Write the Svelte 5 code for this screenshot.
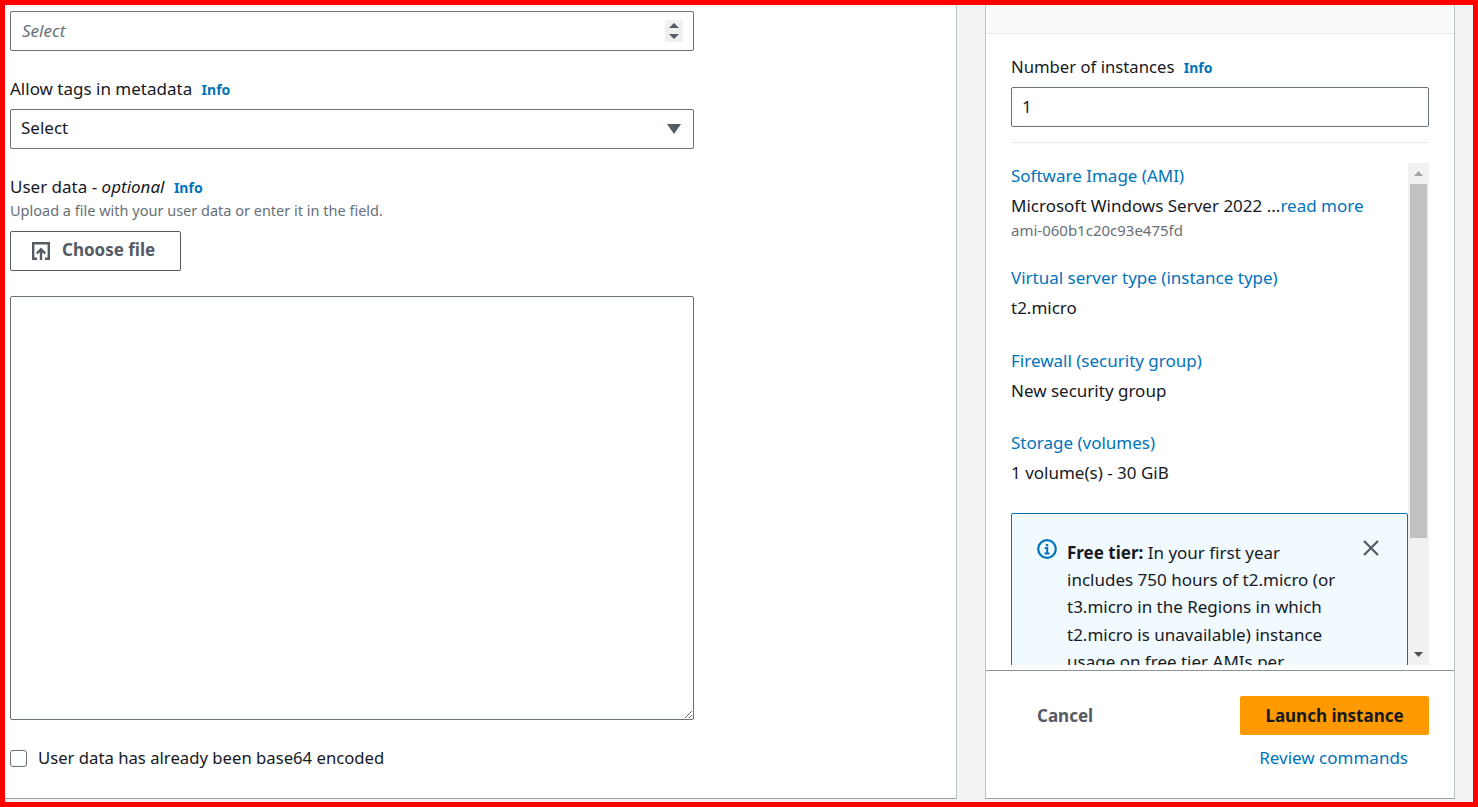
<script>
	const summary = [
		{ title: 'Software Image (AMI)', value: 'Microsoft Windows Server 2022 ...', more: 'read more', note: 'ami-060b1c20c93e475fd' },
		{ title: 'Virtual server type (instance type)', value: 't2.micro' },
		{ title: 'Firewall (security group)', value: 'New security group' },
		{ title: 'Storage (volumes)', value: '1 volume(s) - 30 GiB' }
	];
</script>

<div class="frame">
	<main class="form">
		<div class="select italic">
			<span>Select</span>
			<span class="stepper">
				<svg width="12" height="18" viewBox="0 0 12 18"><path d="M6 1l5 5H1zM6 17l-5-5h10z" fill="#545b64" /></svg>
			</span>
		</div>

		<div class="label first">Allow tags in metadata <a href="#info" class="info">Info</a></div>
		<div class="select">
			<span class="select-text">Select</span>
			<svg class="caret" width="14" height="10" viewBox="0 0 14 10"><path d="M0 0h14L7 10z" fill="#545b64" /></svg>
		</div>

		<div class="label second">User data - <em>optional</em> <a href="#info" class="info">Info</a></div>
		<div class="hint">Upload a file with your user data or enter it in the field.</div>
		<button class="choose">
			<svg width="18" height="18" viewBox="0 0 18 18" fill="none" stroke="#545b64" stroke-width="2.400">
				<path d="M5 16.800H1.200V1.200h15.600v15.600H13" />
				<path d="M9 18V7.500M4.800 11.500L9 7.300l4.200 4.200" />
			</svg>
			<span class="choose-text">Choose file</span>
		</button>
		<textarea class="data"></textarea>
		<label class="check">
			<input type="checkbox" />
			User data has already been base64 encoded
		</label>
	</main>

	<aside class="panel">
		<div class="head"></div>
		<div class="instances">
			<div class="label">Number of instances <a href="#info" class="info">Info</a></div>
			<input class="count" value="1" />
		</div>
		<div class="scroller">
			<div class="items">
				{#each summary as item}
					<div class="item">
						<a href="#s" class="link">{item.title}</a>
						<div class="value">{item.value}{#if item.more}<a href="#s" class="link">{item.more}</a>{/if}</div>
						{#if item.note}<div class="note">{item.note}</div>{/if}
					</div>
				{/each}
				<div class="alert">
					<svg class="alert-icon" width="20" height="20" viewBox="0 0 20 20" fill="none" stroke="#0073bb">
						<circle cx="10" cy="10" r="8.800" stroke-width="2.200" />
						<path d="M7.800 9h2.400v5M7.500 14.500h5" stroke-width="2" />
						<path d="M10 5v2.200" stroke-width="2.400" />
					</svg>
					<p><strong>Free tier:</strong> In your first year includes 750 hours of t2.micro (or t3.micro in the Regions in which t2.micro is unavailable) instance usage on free tier AMIs per month</p>
					<svg class="close" width="18" height="18" viewBox="0 0 18 18" fill="none" stroke="#545b64" stroke-width="2.200">
						<path d="M2 2l14 14M16 2L2 16" />
					</svg>
				</div>
			</div>
			<div class="bar">
				<svg width="17" height="21" viewBox="0 0 17 21"><path d="M8.500 8l4.500 5H4z" fill="#a3a3a3" /></svg>
				<div class="thumb"></div>
				<svg class="down" width="17" height="21" viewBox="0 0 17 21"><path d="M4 8h9l-4.500 5z" fill="#505050" /></svg>
			</div>
		</div>
		<footer class="actions">
			<div class="buttons">
				<button class="cancel">Cancel</button>
				<button class="launch">Launch instance</button>
			</div>
			<a href="#r" class="link review">Review commands</a>
		</footer>
	</aside>
</div>

<style>
	:global(body) {
		margin: 0;
		overflow: hidden;
	}

	.frame {
		border: 5px solid #f00;
		box-sizing: border-box;
		display: flex;
		height: 807px;
		background: #f2f3f3;
		color: #16191f;
		font-family: 'Noto Sans', sans-serif;
		font-size: 17px;
		line-height: 22px;
		overflow: hidden;
	}

	.form {
		background: #fff;
		width: 952px;
		height: 794px;
		box-sizing: border-box;
		padding: 6px 0 0 5px;
		border-right: 1px solid #bcc3c3;
		border-bottom: 1px solid #9aa2a2;
		margin-right: 28px;
		flex-shrink: 0;
		overflow: hidden;
	}

	.select {
		align-items: center;
		border: 1px solid #687078;
		border-radius: 2px;
		box-sizing: border-box;
		display: flex;
		height: 40px;
		justify-content: space-between;
		padding: 0 12px 0 10px;
		width: 684px;
	}

	.select-text {
		margin-top: -2px;
	}

	.italic {
		color: #687078;
		font-style: italic;
		padding: 0 10px 0 11px;
	}

	.stepper {
		align-items: center;
		background: #f0f0f0;
		display: flex;
		height: 22px;
		justify-content: center;
		width: 18px;
	}

	.label.first {
		margin: 27px 0 8px;
	}

	.label.second {
		margin-top: 27px;
	}

	.info {
		color: #0073bb;
		font-size: 14px;
		font-weight: 700;
		margin-left: 5px;
		text-decoration: none;
	}

	.hint {
		color: #687078;
		font-size: 14.500px;
		line-height: 20px;
		margin: 1px 0 11px;
	}

	.choose {
		align-items: center;
		background: #fff;
		border: 1px solid #545b64;
		border-radius: 2px;
		box-sizing: border-box;
		color: #545b64;
		display: flex;
		font: 700 17px/22px 'Noto Sans', sans-serif;
		gap: 12px;
		height: 40px;
		padding: 0 0 0 21px;
		width: 171px;
	}

	.choose-text {
		margin-top: -2px;
	}

	.data {
		border: 1px solid #687078;
		border-radius: 2px;
		box-sizing: border-box;
		display: block;
		height: 424px;
		margin: 25px 0 27px;
		outline: 0;
		resize: vertical;
		width: 684px;
	}

	.check {
		align-items: center;
		display: flex;
		font-size: 16.700px;
		gap: 11px;
	}

	.check input {
		appearance: none;
		border: 1px solid #687078;
		border-radius: 3px;
		box-sizing: border-box;
		height: 17px;
		margin: 0;
		width: 17px;
	}

	.panel {
		background: #fff;
		border-left: 1px solid #bcc3c3;
		border-right: 1px solid #bcc3c3;
		border-bottom: 1px solid #9aa2a2;
		box-sizing: border-box;
		display: flex;
		flex-direction: column;
		height: 794px;
		width: 470px;
		flex-shrink: 0;
	}

	.head {
		background: #fafafa;
		border-bottom: 1px solid #eaeded;
		flex-shrink: 0;
		height: 28px;
	}

	.instances {
		border-bottom: 1px solid #eaeded;
		margin: 22px 25px 20px 25px;
		padding-bottom: 15px;
	}

	.instances .label {
		font-size: 16.700px;
		margin-bottom: 8px;
	}

	.count {
		border: 1px solid #687078;
		border-radius: 2px;
		box-sizing: border-box;
		color: #16191f;
		display: block;
		font: 17px/22px 'Noto Sans', sans-serif;
		height: 40px;
		outline: 0;
		padding: 0 10px 2px;
		width: 100%;
	}

	.scroller {
		display: flex;
		height: 502px;
		margin: 0 25px;
		overflow: hidden;
	}

	.items {
		flex: 1;
		min-width: 0;
		padding-top: 2px;
	}

	.item {
		margin-bottom: 30.500px;
	}

	.link {
		color: #0073bb;
		text-decoration: none;
	}

	.value {
		margin-top: 8px;
	}

	.note {
		color: #687078;
		font-size: 15px;
		line-height: 20px;
		margin: 3px 0 -3.500px;
	}

	.alert {
		background: #f1faff;
		border: 1px solid #0073bb;
		border-radius: 2px;
		box-sizing: border-box;
		display: flex;
		margin-top: -2px;
		padding: 25px 26px 0 25px;
		height: 300px;
	}

	.alert-icon {
		flex-shrink: 0;
		margin-right: 10px;
	}

	.alert p {
		color: #16191f;
		line-height: 27.400px;
		margin: 0;
		width: 270px;
	}

	.close {
		flex-shrink: 0;
		margin-left: 25px;
	}

	.bar {
		background: #f1f1f1;
		box-sizing: border-box;
		display: flex;
		flex-direction: column;
		flex-shrink: 0;
		padding: 0 2px;
		width: 21px;
	}

	.bar svg {
		flex-shrink: 0;
	}

	.thumb {
		background: #c1c1c1;
		flex-shrink: 0;
		height: 354px;
	}

	.down {
		margin-top: auto;
	}

	.actions {
		border-top: 1px solid #879596;
		flex: 1;
		margin-top: 5px;
		padding: 25px 25px 0 25px;
		text-align: right;
	}

	.buttons {
		align-items: center;
		display: flex;
		justify-content: space-between;
	}

	.cancel {
		background: none;
		border: 0;
		color: #545b64;
		font: 700 17px/22px 'Noto Sans', sans-serif;
		margin-left: 26px;
		padding: 0;
	}

	.launch {
		background: #f90;
		border: 0;
		border-radius: 2px;
		color: #16191f;
		font: 700 17px/22px 'Noto Sans', sans-serif;
		height: 39px;
		width: 189px;
	}

	.review {
		display: block;
		margin: 12px 21px 0 0;
	}
</style>
